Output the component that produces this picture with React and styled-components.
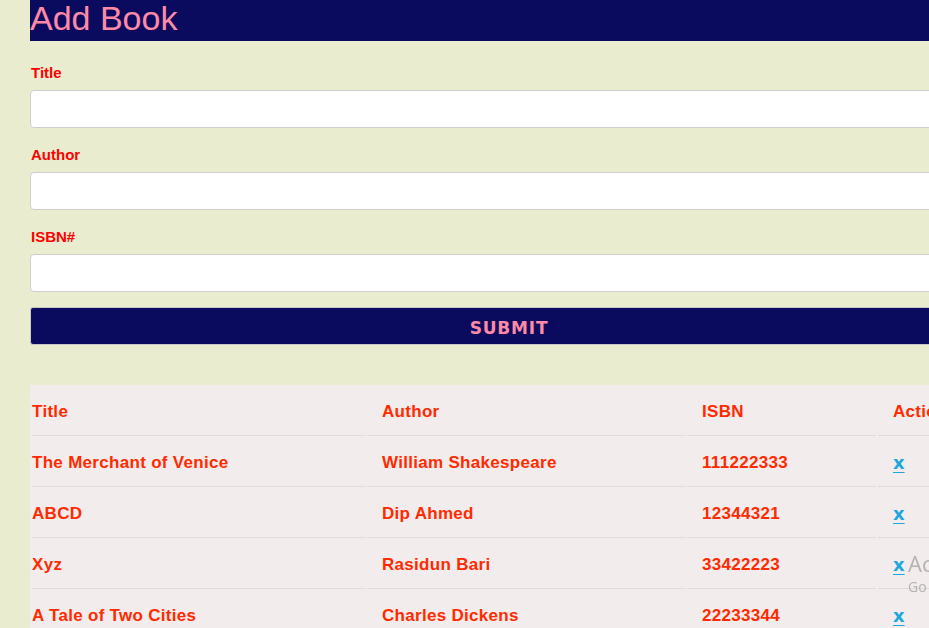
import React from 'react'
import styled, { createGlobalStyle } from 'styled-components'

const Global = createGlobalStyle`
  html, body {
    margin: 0;
    padding: 0;
    background: #e9ecce;
    overflow: hidden;
  }
`

const Page = styled.div`
  padding-left: 30px;
  width: 958px;
  font-family: 'Liberation Sans', Arial, sans-serif;
`

const Header = styled.h1`
  margin: 0;
  height: 41px;
  background: #0a0a5e;
  color: #ff8aa6;
  font-weight: normal;
  font-size: 34px;
  line-height: 36px;
`

const Form = styled.form`
  display: flex;
  flex-direction: column;
  padding-top: 23px;
`

const Field = styled.div`
  display: flex;
  flex-direction: column;
  margin-bottom: 18px;
`

const Label = styled.label`
  color: #ff0000;
  font-weight: bold;
  font-size: 15px;
  line-height: 17px;
  margin-bottom: 9px;
  padding-left: 1px;
`

const Input = styled.input`
  box-sizing: border-box;
  height: 38px;
  width: 100%;
  border: 1px solid #cfcfcf;
  border-radius: 4px;
  background: #fff;
`

const Submit = styled.button`
  box-sizing: border-box;
  margin-top: -3px;
  height: 38px;
  width: 100%;
  padding-top: 4px;
  background: #0a0a5e;
  border: 1px solid #c8c8c8;
  border-radius: 3px;
  color: #ff8aa6;
  font-family: 'DejaVu Sans', Verdana, sans-serif;
  font-weight: bold;
  font-size: 17px;
  letter-spacing: 0.8px;
`

const Table = styled.table`
  margin-top: 40px;
  width: 958px;
  background: #f2ecec;
  border-spacing: 2px;
  table-layout: fixed;
`

const Cell = styled.td`
  box-sizing: border-box;
  height: 49px;
  padding: 2px 0 0 ${p => (p.$first ? 0 : 15)}px;
  border-bottom: 1px solid #e0dcdc;
  color: #ff2a00;
  font-weight: bold;
  font-size: 17px;
  letter-spacing: 0.3px;
  text-align: left;
  white-space: nowrap;
  overflow: visible;
`

const Remove = styled.a`
  color: #1ea7dc;
  font-family: 'DejaVu Sans', Verdana, sans-serif;
  font-weight: bold;
  font-size: 18px;
  letter-spacing: 0;
  text-decoration: underline;
  text-underline-offset: 3px;
  cursor: pointer;
`

const Watermark = styled.div`
  position: fixed;
  left: 908px;
  top: 549px;
  color: #b4b2b2;
  font-family: 'Open Sans', sans-serif;
  white-space: nowrap;
`

const WmTitle = styled.div`
  font-size: 22px;
  line-height: 28px;
`

const WmSub = styled.div`
  font-size: 14px;
  line-height: 18px;
  margin-top: 1px;
`

const books = [
  ['The Merchant of Venice', 'William Shakespeare', '111222333'],
  ['ABCD', 'Dip Ahmed', '12344321'],
  ['Xyz', 'Rasidun Bari', '33422223'],
  ['A Tale of Two Cities', 'Charles Dickens', '22233344'],
]

const App = () => {
  return (
    <Page>
      <Global />
      <Header>Add Book</Header>
      <Form onSubmit={e => e.preventDefault()}>
        <Field>
          <Label>Title</Label>
          <Input type="text" />
        </Field>
        <Field>
          <Label>Author</Label>
          <Input type="text" />
        </Field>
        <Field>
          <Label>ISBN#</Label>
          <Input type="text" />
        </Field>
        <Submit type="submit">SUBMIT</Submit>
      </Form>
      <Table>
        <colgroup>
          <col style={{ width: 333 }} />
          <col style={{ width: 318 }} />
          <col style={{ width: 189 }} />
          <col />
        </colgroup>
        <thead>
          <tr>
            <Cell as="th" $first>Title</Cell>
            <Cell as="th">Author</Cell>
            <Cell as="th">ISBN</Cell>
            <Cell as="th">Action</Cell>
          </tr>
        </thead>
        <tbody>
          {books.map(b => (
            <tr key={b[2]}>
              <Cell $first>{b[0]}</Cell>
              <Cell>{b[1]}</Cell>
              <Cell>{b[2]}</Cell>
              <Cell><Remove>x</Remove></Cell>
            </tr>
          ))}
        </tbody>
      </Table>
      <Watermark>
        <WmTitle>Activate Windows</WmTitle>
        <WmSub>Go to Settings to activate Windows.</WmSub>
      </Watermark>
    </Page>
  )
}

export default App
